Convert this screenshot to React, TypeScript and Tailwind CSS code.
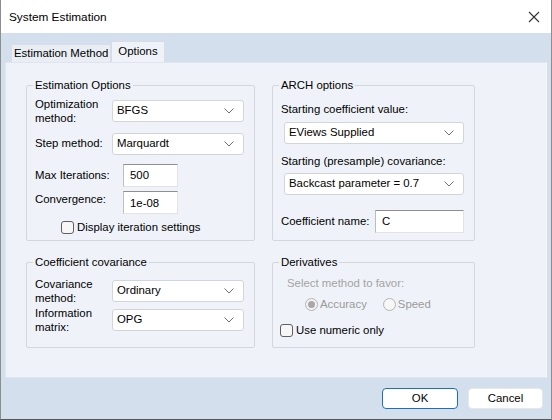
import React from 'react';

const Chevron: React.FC = () => (
  <svg width="10" height="6" viewBox="0 0 10 6" className="shrink-0">
    <path d="M0.5 0.5 L5 5 L9.5 0.5" fill="none" stroke="#6f6f6f" strokeWidth="1" />
  </svg>
);

const Select: React.FC<{ value: string; className?: string }> = ({ value, className = '' }) => (
  <div
    className={`flex items-center justify-between h-[22px] bg-white border border-[#d2d6dc] rounded-[3px] pl-[4px] pr-[9px] ${className}`}
  >
    <span>{value}</span>
    <Chevron />
  </div>
);

const TextBox: React.FC<{ value: string; className?: string }> = ({ value, className = '' }) => (
  <div
    className={`flex items-center h-[23px] bg-white border border-[#e3e3e3] border-t-[#8f8f8f] border-l-[#bdbdbd] pl-[6px] ${className}`}
  >
    {value}
  </div>
);

const Checkbox: React.FC<{ label: string; className?: string }> = ({ label, className = '' }) => (
  <div className={`flex items-center gap-[3px] leading-[14px] ${className}`}>
    <div className="w-[13px] h-[13px] rounded-[3px] border border-[#5f5f5f] bg-[#f7f7f7]" />
    <span>{label}</span>
  </div>
);

const Group: React.FC<{ title: string; className?: string; children: React.ReactNode }> = ({
  title,
  className = '',
  children,
}) => (
  <fieldset className={`border border-[#d3d7dd] rounded-[2px] px-[8px] ${className}`}>
    <legend className="px-[2px] -ml-[2px] leading-[16px]">{title}</legend>
    {children}
  </fieldset>
);

export default function App() {
  return (
    <div
      className="w-[552px] h-[420px] flex flex-col bg-[#d4dfed] border-l border-r border-b border-l-[#8d8d8d] border-r-[#8d8d8d] border-b-[#555] text-[11.4px] text-black overflow-hidden"
      style={{ fontFamily: '"Liberation Sans", Arial, sans-serif' }}
    >
      {/* title bar */}
      <div className="h-[33px] bg-white flex items-center justify-between pl-[8px] pr-[11px] shrink-0">
        <span className="text-[11.8px] mt-[2px]">System Estimation</span>
        <svg width="12" height="12" viewBox="0 0 12 12">
          <path d="M1 1 L11 11 M11 1 L1 11" stroke="#333" strokeWidth="1.1" />
        </svg>
      </div>

      {/* tabs */}
      <div className="flex items-end h-[21px] mt-[8px] pl-[10px]">
        <div className="h-[18px] px-[2px] flex items-center bg-[#e9eef5] border border-b-0 border-[#d6dde7]">
          Estimation Method
        </div>
        <div className="h-[21px] px-[6px] flex items-center bg-[#eff3f9] border border-b-0 border-[#d6dde7]">
          Options
        </div>
      </div>

      {/* panel */}
      <div className="mx-[4px] h-[316px] bg-[#eff3f9] border border-[#dfe5ee] border-r-[#f7f9fc] pl-[20px] pt-[14px]">
        <div className="grid grid-cols-[229px_203px] gap-x-[17px] gap-y-[13px]">
          <Group title="Estimation Options" className="h-[164px]">
            <div className="flex items-center mt-[4px]">
              <div className="w-[77px] leading-[14px]">
                Optimization
                <br />
                method:
              </div>
              <Select value="BFGS" className="w-[132px]" />
            </div>
            <div className="flex items-center mt-[8px]">
              <div className="w-[77px]">Step method:</div>
              <Select value="Marquardt" className="w-[132px]" />
            </div>
            <div className="flex items-center mt-[9px]">
              <div className="w-[88px]">Max Iterations:</div>
              <TextBox value="500" className="w-[55px]" />
            </div>
            <div className="flex items-center mt-[4px]">
              <div className="w-[88px] -mt-[6px]">Convergence:</div>
              <TextBox value="1e-08" className="w-[55px] pt-[3px]" />
            </div>
            <Checkbox label="Display iteration settings" className="mt-[6px] ml-[26px]" />
          </Group>

          <Group title="ARCH options" className="h-[164px]">
            <div className="mt-[9px] leading-[14px]">Starting coefficient value:</div>
            <Select value="EViews Supplied" className="w-[180px] ml-[3px] mt-[6px]" />
            <div className="mt-[10px] leading-[14px]">Starting (presample) covariance:</div>
            <Select value="Backcast parameter = 0.7" className="w-[180px] ml-[3px] mt-[5px]" />
            <div className="flex items-center mt-[15px]">
              <div className="w-[94px]">Coefficient name:</div>
              <TextBox value="C" className="w-[89px] h-[22px]" />
            </div>
          </Group>

          <Group title="Coefficient covariance" className="h-[94px]">
            <div className="flex items-center mt-[7px]">
              <div className="w-[77px] leading-[14px]">
                Covariance
                <br />
                method:
              </div>
              <Select value="Ordinary" className="w-[132px]" />
            </div>
            <div className="flex items-center mt-[1px]">
              <div className="w-[77px] leading-[14px]">
                Information
                <br />
                matrix:
              </div>
              <Select value="OPG" className="w-[132px]" />
            </div>
          </Group>

          <Group title="Derivatives" className="h-[94px]">
            <div className="mt-[6px] ml-[6px] leading-[14px] text-[#a3a3a3]">Select method to favor:</div>
            <div className="flex items-center mt-[6px] ml-[24px] text-[#9a9a9a]">
              <div className="w-[13px] h-[13px] rounded-full border border-[#b3b3b3] bg-[#f3f3f3] flex items-center justify-center">
                <div className="w-[7px] h-[7px] rounded-full bg-[#a8a8a8]" />
              </div>
              <span className="ml-[2px]">Accuracy</span>
              <div className="w-[13px] h-[13px] rounded-full border border-[#b3b3b3] bg-[#f7f7f7] ml-[16px]" />
              <span className="ml-[2px]">Speed</span>
            </div>
            <Checkbox label="Use numeric only" className="mt-[10px] ml-[-1px]" />
          </Group>
        </div>
      </div>

      {/* buttons */}
      <div className="flex justify-end gap-[10px] mt-[10px] pr-[8px]">
        <button className="w-[76px] h-[21px] bg-white border border-[#1a6fc4] rounded-[4px] text-[11.4px]">OK</button>
        <button className="w-[75px] h-[21px] bg-white border border-[#e4e7eb] rounded-[4px] text-[11.4px]">Cancel</button>
      </div>
    </div>
  );
}
